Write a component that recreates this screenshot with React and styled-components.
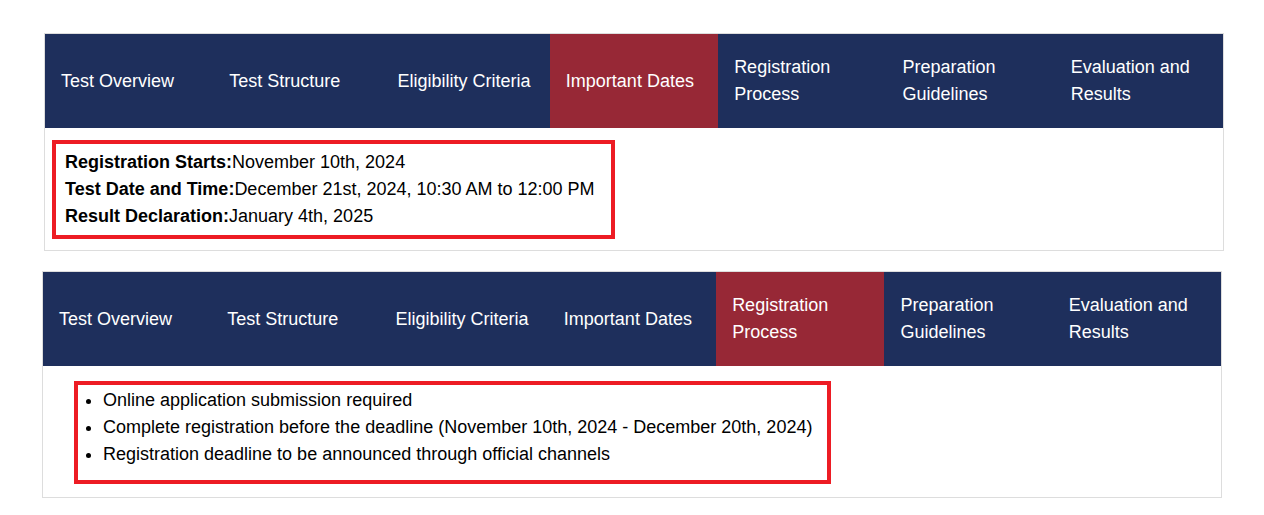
import React from 'react';
import styled, { createGlobalStyle } from 'styled-components';

const GlobalStyle = createGlobalStyle`
  body {
    margin: 0;
    background: #fff;
    font-family: "Liberation Sans", Arial, sans-serif;
    color: #000;
  }
`;

const Page = styled.div`
  padding: 33px 0 16px;
  display: flex;
  flex-direction: column;
  gap: 20px;
`;

const Panel = styled.section`
  width: 1180px;
  box-sizing: border-box;
  margin-left: ${(p) => p.$left}px;
  border: 1px solid #dddddd;
  background: #fff;
`;

const TabBar = styled.nav`
  display: flex;
  background: #1e2f5c;
`;

const Tab = styled.div`
  flex: 1 1 0;
  min-width: 0;
  display: flex;
  align-items: center;
  padding: 20px 10px 20px 16px;
  font-size: 18px;
  line-height: 27px;
  min-height: 54px;
  color: #fff;
  background: ${(p) => (p.$active ? '#972836' : 'transparent')};
  cursor: pointer;
`;

const Body = styled.div`
  padding: ${(p) => p.$pad};
`;

const Highlight = styled.div`
  display: inline-block;
  border: 4px solid #ed1c24;
  padding: ${(p) => p.$pad};
  font-size: 18px;
  line-height: 27px;
`;

const Line = styled.div`
  white-space: nowrap;
`;

const Label = styled.strong`
  font-weight: 700;
`;

const List = styled.ul`
  margin: 0;
  padding: 0 0 0 25px;
  list-style: disc;
`;

const tabs = [
  'Test Overview',
  'Test Structure',
  'Eligibility Criteria',
  'Important Dates',
  'Registration Process',
  'Preparation Guidelines',
  'Evaluation and Results',
];

const TabPanel = ({ active, left, children }) => (
  <Panel $left={left}>
    <TabBar>
      {tabs.map((t, i) => (
        <Tab key={t} $active={i === active}>
          {t}
        </Tab>
      ))}
    </TabBar>
    {children}
  </Panel>
);

const dates = [
  ['Registration Starts:', 'November 10th, 2024'],
  ['Test Date and Time:', 'December 21st, 2024, 10:30 AM to 12:00 PM'],
  ['Result Declaration:', 'January 4th, 2025'],
];

const steps = [
  'Online application submission required',
  'Complete registration before the deadline (November 10th, 2024 - December 20th, 2024)',
  'Registration deadline to be announced through official channels',
];

export default function App() {
  return (
    <>
      <GlobalStyle />
      <Page>
        <TabPanel active={3} left={44}>
          <Body $pad="12px 0 11px 7px">
            <Highlight $pad="5px 16px 5px 9px">
              {dates.map(([label, value]) => (
                <Line key={label}>
                  <Label>{label}</Label>
                  {value}
                </Line>
              ))}
            </Highlight>
          </Body>
        </TabPanel>

        <TabPanel active={4} left={42}>
          <Body $pad="15px 0 13px 31px">
            <Highlight $pad="2px 15px 12px 0">
              <List>
                {steps.map((s) => (
                  <li key={s}>{s}</li>
                ))}
              </List>
            </Highlight>
          </Body>
        </TabPanel>
      </Page>
    </>
  );
}
